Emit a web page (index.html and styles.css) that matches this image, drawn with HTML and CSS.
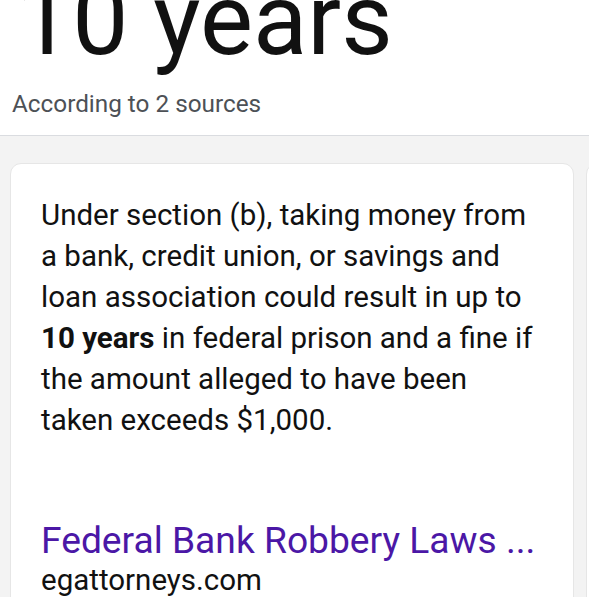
FILE: index.html
```html
<!DOCTYPE html>
<html>
<head>
<meta charset="utf-8">
<link rel="stylesheet" href="styles.css">
</head>
<body>
<div class="header">
  <div class="answer">10 years</div>
  <div class="sources">According to 2 sources</div>
</div>
<div class="main">
  <div class="card">
    <p class="snippet">Under section (b), taking money from a bank, credit union, or savings and loan association could result in up to <b>10 years</b> in federal prison and a fine if the amount alleged to have been taken exceeds $1,000.</p>
    <a class="title" href="#">Federal Bank Robbery Laws ...</a>
    <div class="domain">egattorneys.com</div>
  </div>
  <div class="card next"></div>
</div>
</body>
</html>
```

FILE: styles.css
```css
html, body {
  margin: 0;
  padding: 0;
  height: 100%;
  overflow: hidden;
  font-family: Roboto, "Noto Sans", sans-serif;
  color: #202124;
  background: #f3f3f3;
}
.header {
  display: flow-root;
  background: #fff;
  border-bottom: 1px solid #dadce0;
  padding: 0 0 0 12px;
  height: 136px;
  box-sizing: border-box;
  overflow: hidden;
}
.answer {
  font-size: 100px;
  line-height: 100px;
  margin-top: -30px;
  margin-left: 4px;
  color: #111;
  white-space: nowrap;
}
.sources {
  font-size: 24.3px;
  line-height: 28px;
  margin-top: 20px;
  color: #4d5156;
}
.main {
  display: flex;
  gap: 12px;
  padding: 27px 0 0 10px;
  overflow: hidden;
}
.card {
  flex: 0 0 564px;
  box-sizing: border-box;
  background: #fff;
  border: 1px solid #e6e6e6;
  border-radius: 11px;
  padding: 31px 30px 0 30px;
  height: 600px;
}
.snippet {
  margin: 0;
  font-size: 29.5px;
  line-height: 41px;
  color: #111;
}
.snippet b {
  font-weight: 700;
}
.title {
  display: block;
  margin-top: 75px;
  font-size: 37.2px;
  line-height: 48px;
  color: #4b17a6;
  text-decoration: none;
  white-space: nowrap;
}
.domain {
  font-size: 29.5px;
  line-height: 32px;
  color: #111;
}
```
